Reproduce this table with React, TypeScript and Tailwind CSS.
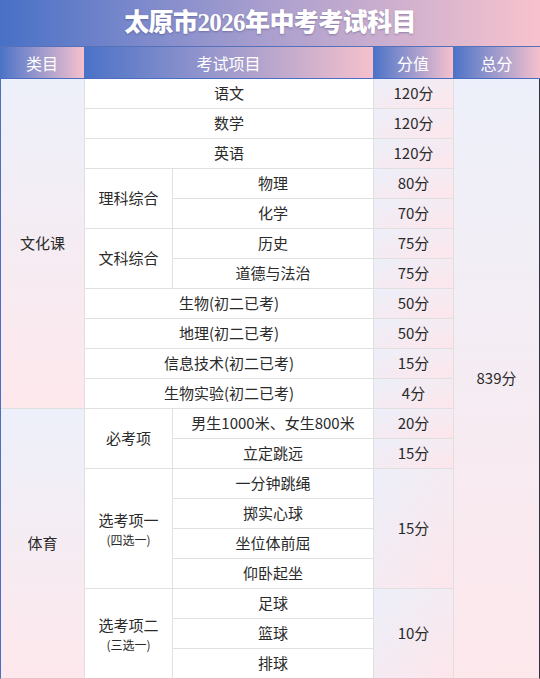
import React from "react";

const font = { fontFamily: '"Noto Sans CJK SC", "Noto Sans", sans-serif' };

function W({ children, className = "" }: { children: React.ReactNode; className?: string }) {
  return <div className={"flex items-center justify-center bg-white text-[15px] text-[#2a2a2a] " + className}>{children}</div>;
}

function S({ children, className = "" }: { children: React.ReactNode; className?: string }) {
  return (
    <div className={"flex items-center justify-center bg-linear-to-br from-[#eceff9] to-[#fde6eb] text-[15px] text-[#2a2a2a] " + className}>
      {children}
    </div>
  );
}

export default function App() {
  return (
    <div className="w-[540px] h-[679px] overflow-hidden bg-white" style={font}>
      <div className="h-[47px] flex items-center justify-center bg-linear-to-r from-[#4770c6] via-[#ab9fce] to-[#f8c2cd] border-b border-[#5670ba]">
        <span
          className="text-white text-[25px] tracking-[-0.6px] font-black [text-shadow:0_1px_2px_rgba(40,40,90,0.35)]"
          style={{ fontFamily: '"Liberation Serif", "Noto Sans CJK SC", serif' }}
        >
          太原市2026年中考考试科目
        </span>
      </div>
      <div className="h-[32px] grid grid-cols-[84px_289px_80px_87px] border-b border-[#4a6cc2]">
        <div className="flex items-center justify-center bg-linear-to-r from-[#4a72c7] to-[#f6c0cc] text-white text-[16px]">类目</div>
        <div className="flex items-center justify-center bg-linear-to-r from-[#4a72c7] to-[#f6c0cc] text-white text-[16px]">考试项目</div>
        <div className="flex items-center justify-center bg-linear-to-r from-[#4a72c7] to-[#f6c0cc] text-white text-[16px]">分值</div>
        <div className="flex items-center justify-center bg-linear-to-r from-[#4a72c7] to-[#f6c0cc] text-white text-[16px]">总分</div>
      </div>
      <div className="grid grid-cols-[83px_87px_200px_79px_85px] grid-rows-[repeat(20,29px)] gap-px bg-[#e0e0e0] border-l border-[#4a6fc2] border-r border-r-[#30303c] border-b border-b-[#f5bac7]">
        <div className="col-start-1 row-start-1 row-span-11 flex items-center justify-center bg-linear-to-b from-[#edf0fa] to-[#fde8ec] text-[15px] text-[#2a2a2a]">文化课</div>
        <div className="col-start-1 row-start-12 row-span-9 flex items-center justify-center bg-linear-to-b from-[#edf0fa] to-[#fde8ec] text-[15px] text-[#2a2a2a]">体育</div>
        <div className="col-start-5 row-start-1 row-span-20 flex items-center justify-center bg-linear-to-b from-[#edf0fa] to-[#fde8ec] text-[15px] text-[#2a2a2a]">839分</div>

        <W className="col-start-2 col-span-2 row-start-1">语文</W>
        <S className="col-start-4 row-start-1">120分</S>
        <W className="col-start-2 col-span-2 row-start-2">数学</W>
        <S className="col-start-4 row-start-2">120分</S>
        <W className="col-start-2 col-span-2 row-start-3">英语</W>
        <S className="col-start-4 row-start-3">120分</S>

        <W className="col-start-2 row-start-4 row-span-2">理科综合</W>
        <W className="col-start-3 row-start-4">物理</W>
        <S className="col-start-4 row-start-4">80分</S>
        <W className="col-start-3 row-start-5">化学</W>
        <S className="col-start-4 row-start-5">70分</S>

        <W className="col-start-2 row-start-6 row-span-2">文科综合</W>
        <W className="col-start-3 row-start-6">历史</W>
        <S className="col-start-4 row-start-6">75分</S>
        <W className="col-start-3 row-start-7">道德与法治</W>
        <S className="col-start-4 row-start-7">75分</S>

        <W className="col-start-2 col-span-2 row-start-8">生物(初二已考)</W>
        <S className="col-start-4 row-start-8">50分</S>
        <W className="col-start-2 col-span-2 row-start-9">地理(初二已考)</W>
        <S className="col-start-4 row-start-9">50分</S>
        <W className="col-start-2 col-span-2 row-start-10">信息技术(初二已考)</W>
        <S className="col-start-4 row-start-10">15分</S>
        <W className="col-start-2 col-span-2 row-start-11">生物实验(初二已考)</W>
        <S className="col-start-4 row-start-11">4分</S>

        <W className="col-start-2 row-start-12 row-span-2">必考项</W>
        <W className="col-start-3 row-start-12">男生1000米、女生800米</W>
        <S className="col-start-4 row-start-12">20分</S>
        <W className="col-start-3 row-start-13">立定跳远</W>
        <S className="col-start-4 row-start-13">15分</S>

        <W className="col-start-2 row-start-14 row-span-4 flex-col">
          <span className="leading-[22px]">选考项一</span>
          <span className="text-[12px] leading-[18px]">(四选一)</span>
        </W>
        <W className="col-start-3 row-start-14">一分钟跳绳</W>
        <W className="col-start-3 row-start-15">掷实心球</W>
        <W className="col-start-3 row-start-16">坐位体前屈</W>
        <W className="col-start-3 row-start-17">仰卧起坐</W>
        <S className="col-start-4 row-start-14 row-span-4">15分</S>

        <W className="col-start-2 row-start-18 row-span-3 flex-col">
          <span className="leading-[22px]">选考项二</span>
          <span className="text-[12px] leading-[18px]">(三选一)</span>
        </W>
        <W className="col-start-3 row-start-18">足球</W>
        <W className="col-start-3 row-start-19">篮球</W>
        <W className="col-start-3 row-start-20">排球</W>
        <S className="col-start-4 row-start-18 row-span-3">10分</S>
      </div>
    </div>
  );
}
